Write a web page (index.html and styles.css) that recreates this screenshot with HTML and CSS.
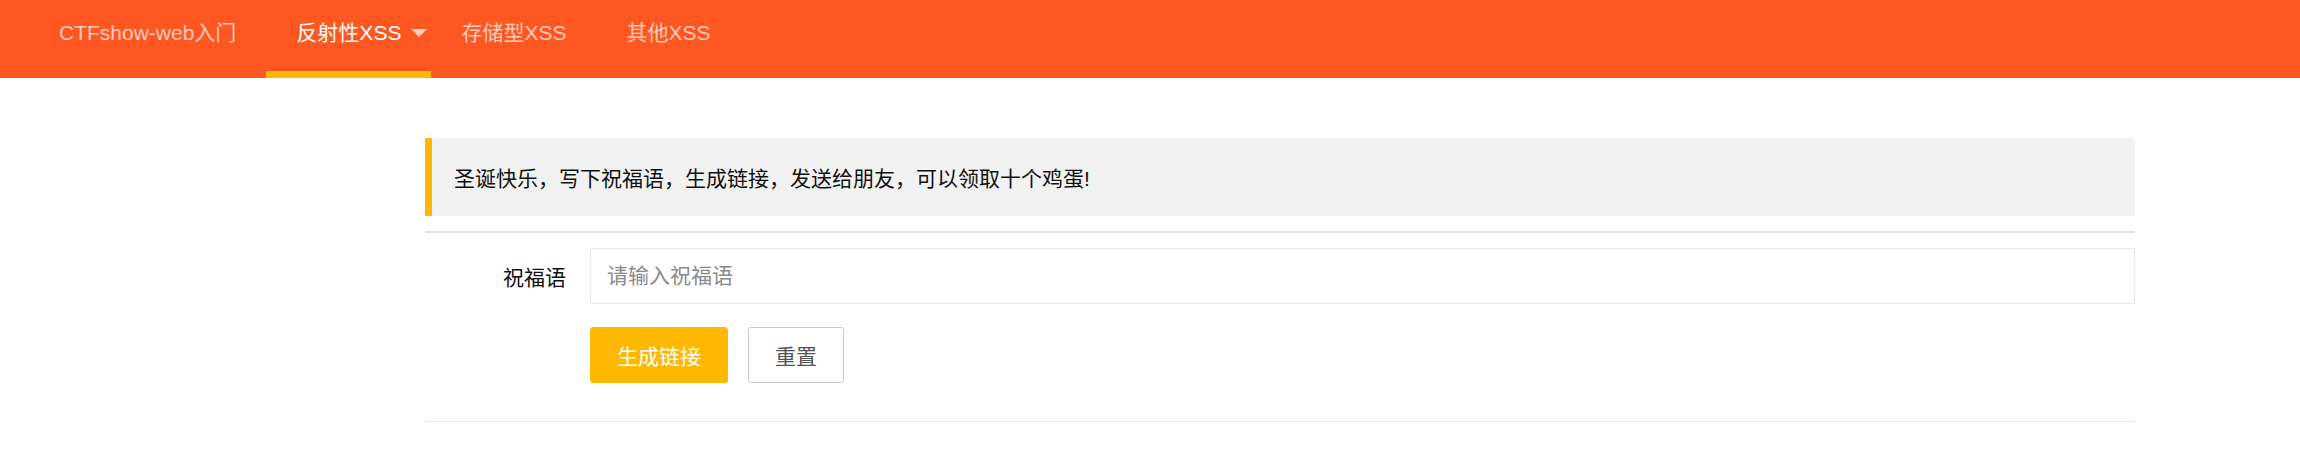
FILE: index.html
```html
<!DOCTYPE html>
<html lang="zh-CN">
<head>
<meta charset="utf-8">
<title>CTFshow XSS</title>
<link rel="stylesheet" href="styles.css">
</head>
<body>
<nav class="nav">
  <ul class="nav-list">
    <li class="nav-item"><a href="#">CTFshow-web入门</a></li>
    <li class="nav-item nav-item-more is-active"><a href="#">反射性XSS<span class="nav-arrow"></span></a><span class="nav-bar"></span></li>
    <li class="nav-item"><a href="#">存储型XSS</a></li>
    <li class="nav-item"><a href="#">其他XSS</a></li>
  </ul>
</nav>
<main class="main">
  <blockquote class="quote">圣诞快乐，写下祝福语，生成链接，发送给朋友，可以领取十个鸡蛋!</blockquote>
  <hr class="divider">
  <form class="form">
    <div class="form-row">
      <label class="form-label" for="msg">祝福语</label>
      <input class="form-input" id="msg" type="text" placeholder="请输入祝福语">
    </div>
    <div class="form-actions">
      <button type="button" class="btn btn-warm">生成链接</button>
      <button type="reset" class="btn btn-primary">重置</button>
    </div>
  </form>
</main>
</body>
</html>
```
FILE: styles.css
```css
* { box-sizing: border-box; }
html, body { margin: 0; padding: 0; background: #fff; }
body {
  font-family: "Liberation Sans", "Noto Sans CJK SC", sans-serif;
  font-size: 21px;
  color: #222;
}
.nav {
  height: 78px;
  background: #FF5722;
}
.nav-list {
  list-style: none;
  margin: 0;
  padding: 0 0 0 29px;
  display: flex;
  height: 78px;
}
.nav-item {
  position: relative;
  height: 78px;
}
.nav-item a {
  display: block;
  position: relative;
  padding: 0 30px;
  line-height: 65px;
  color: rgba(255,255,255,.7);
  text-decoration: none;
  white-space: nowrap;
  font-size: 21px;
}
.nav-item-more a { padding-right: 30px; }
.nav-item.is-active a { color: #fff; }
.nav-arrow {
  position: absolute;
  right: 4px;
  top: 29px;
  width: 0;
  height: 0;
  border-left: 8.5px solid transparent;
  border-right: 8.5px solid transparent;
  border-top: 8px solid rgba(255,255,255,.7);
}
.nav-bar {
  position: absolute;
  left: 0;
  right: 0;
  bottom: 0;
  height: 7px;
  background: #FFB800;
}
.main {
  margin-left: 425px;
  width: 1710px;
  padding-top: 60px;
}
.quote {
  margin: 0;
  height: 78px;
  display: flex;
  align-items: center;
  padding: 0 22px;
  background: #f2f2f2;
  border-left: 7px solid #FFB800;
  border-radius: 0 3px 3px 0;
  color: #111;
  font-size: 21px;
}
.divider {
  margin: 15px 0 0;
  border: 0;
  height: 2px;
  background: #e2e2e2;
}
.form {
  margin: 0;
  padding-top: 15px;
  padding-bottom: 38px;
  border-bottom: 1px solid #eaeaea;
}
.form-row {
  display: flex;
  align-items: center;
}
.form-label {
  width: 141px;
  text-align: right;
  margin-right: 24px;
  color: #111;
}
.form-input {
  flex: 1;
  height: 56px;
  border: 1px solid #e6e6e6;
  border-radius: 3px;
  padding: 0 16px;
  font-family: inherit;
  font-size: 21px;
  color: #333;
  background: #fff;
  outline: none;
}
.form-input::placeholder { color: #8a8a8a; }
.form-actions {
  display: flex;
  gap: 20px;
  padding-left: 165px;
  margin-top: 23px;
}
.btn {
  height: 56px;
  padding: 0 26px;
  font-family: inherit;
  font-size: 21px;
  border-radius: 3px;
  cursor: pointer;
  white-space: nowrap;
}
.btn-warm {
  background: #FFB800;
  border: 1px solid #FFB800;
  color: #fff;
}
.btn-primary {
  background: #fff;
  border: 1px solid #C9C9C9;
  color: #555;
}
```
